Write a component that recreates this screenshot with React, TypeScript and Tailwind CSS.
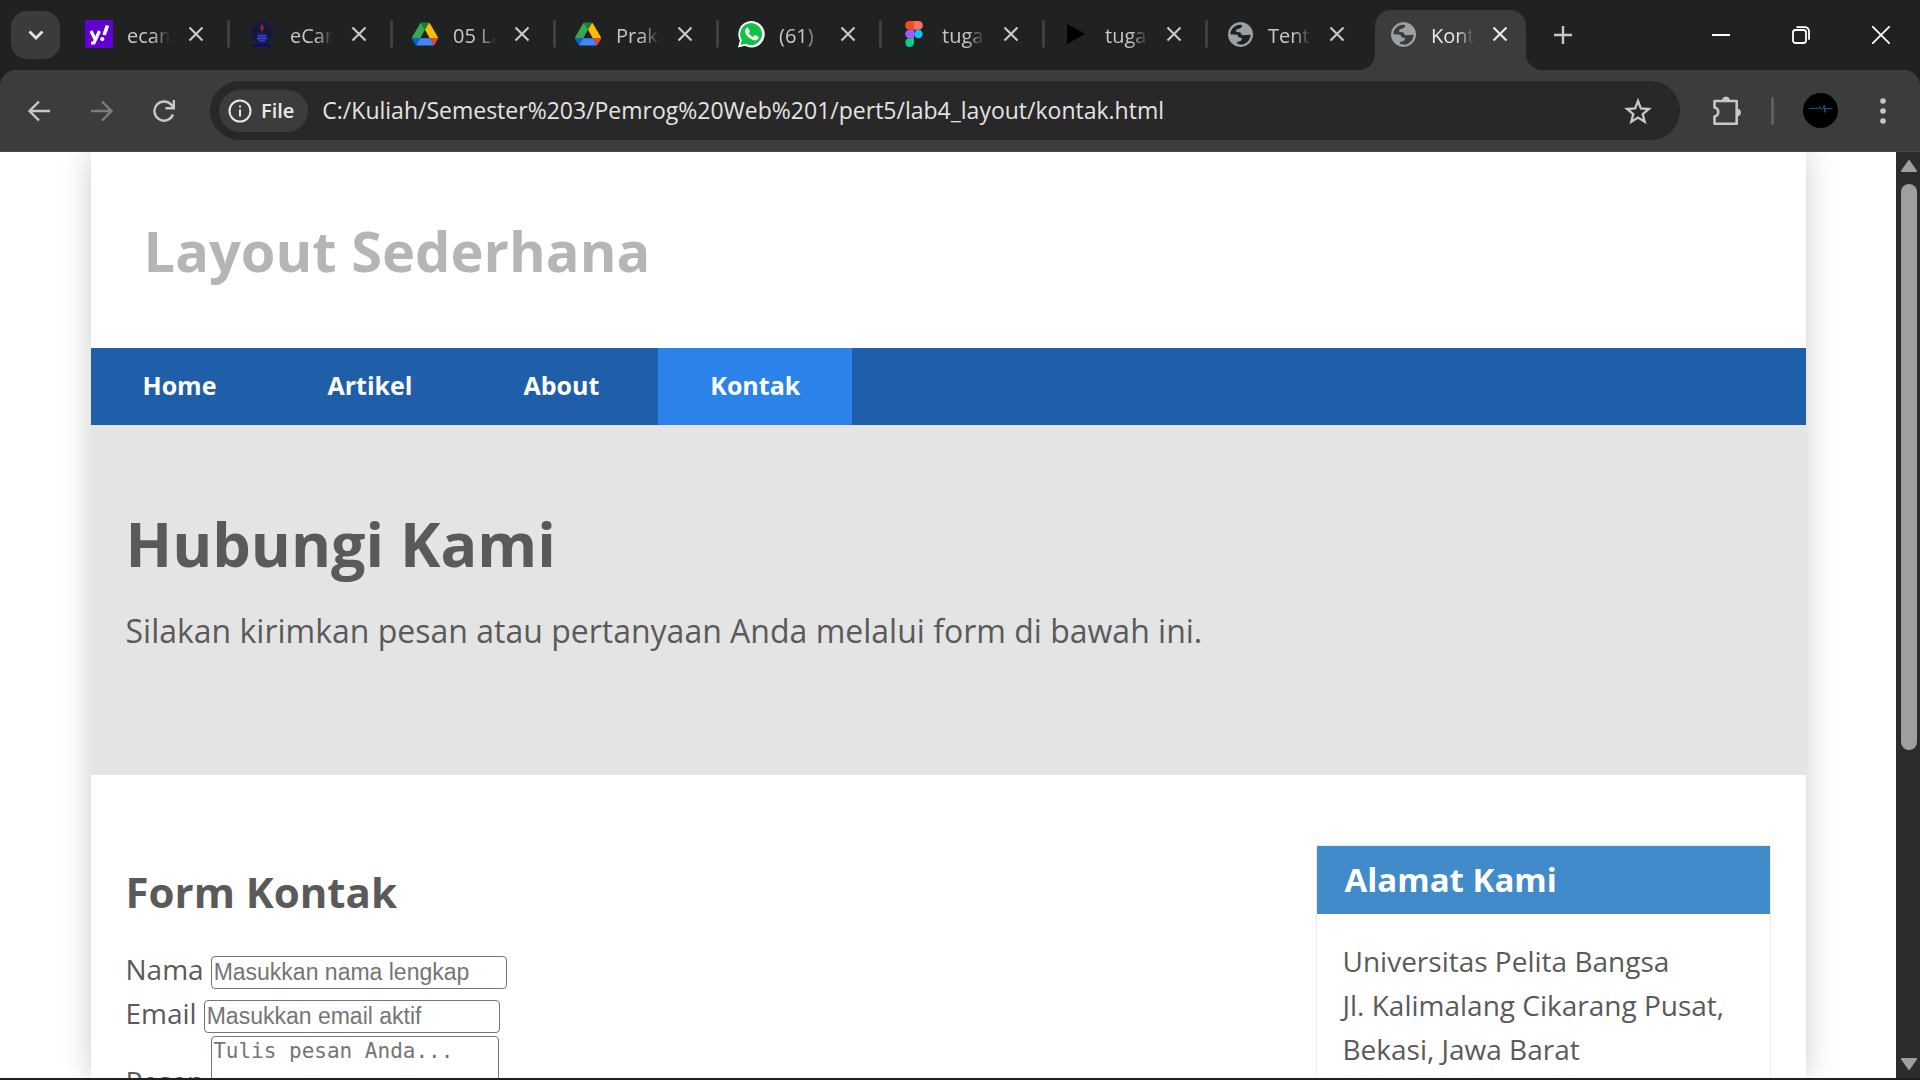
import React from "react";

type TabInfo = { title: string; icon: React.ReactNode; active?: boolean; divider?: boolean };

function Yahoo() {
  return (
    <span className="flex h-7 w-7 items-center justify-center bg-[#5f01d1]">
      <svg viewBox="0 0 28 28" className="h-7 w-7" fill="none" stroke="#fff">
        <path d="M6 11l4.500 9M14.500 11L9 23H6" strokeWidth="3.200" />
        <path d="M22.500 5.500L19 15" strokeWidth="3.600" />
        <circle cx="17.300" cy="19" r="2.100" fill="#fff" stroke="none" />
      </svg>
    </span>
  );
}

function Crest() {
  return (
    <svg viewBox="0 0 28 28" className="h-7 w-7">
      <circle cx="14" cy="13" r="11" fill="#16183a" stroke="#1a1a5c" strokeWidth="1.500" strokeDasharray="2 1" />
      <path d="M14 4c2.500 3 2 5 0 7.500-2.500-2.500-1.500-4.500 0-7.500z" fill="#a81f1d" />
      <path d="M9 15l5-2.500 5 2.500v5l-5 2-5-2z" fill="#1d2390" />
      <path d="M10 16h8M9 18.500h10M11 21h6" stroke="#4a55c4" strokeWidth="0.900" />
      <path d="M5 24h18v2.500H5z" fill="#0a0a78" />
    </svg>
  );
}

function Drive() {
  return (
    <svg viewBox="0 0 87.300 78" className="h-6 w-[26px]">
      <path d="m6.600 66.850 3.850 6.650c.8 1.400 1.950 2.500 3.300 3.300l13.750-23.800h-27.500c0 1.550.4 3.100 1.200 4.500z" fill="#0066da" />
      <path d="m43.650 25-13.750-23.800c-1.350.8-2.500 1.900-3.300 3.300l-25.400 44a9.060 9.060 0 0 0 -1.200 4.500h27.500z" fill="#34a853" />
      <path d="m73.550 76.800c1.350-.8 2.500-1.900 3.300-3.300l1.600-2.750 7.650-13.250c.8-1.400 1.200-2.950 1.200-4.500h-27.502l5.852 11.500z" fill="#ea4335" />
      <path d="m43.650 25 13.750-23.800c-1.350-.8-2.900-1.200-4.500-1.200h-18.500c-1.600 0-3.150.45-4.500 1.200z" fill="#188038" />
      <path d="m59.800 53h-32.300l-13.750 23.800c1.350.8 2.900 1.200 4.500 1.200h50.800c1.600 0 3.150-.45 4.500-1.200z" fill="#4285f4" />
      <path d="m73.400 26.500-12.700-22c-.8-1.400-1.950-2.500-3.300-3.300l-13.750 23.800 16.150 28h27.450c0-1.550-.4-3.100-1.200-4.500z" fill="#fbbc04" />
    </svg>
  );
}

function WhatsApp() {
  return (
    <svg viewBox="0 0 28 28" className="h-7 w-7">
      <path d="M1 27.500l1.900-7A13.200 13.200 0 1 1 8 25.700z" fill="#fff" />
      <path d="M3.500 25l1.300-4.900a11 11 0 1 1 4 3.700z" fill="#10c344" />
      <path d="M9.500 8.200c.5-.5 1.500-.6 1.900.1l1.300 2.800c.2.600-.3 1.200-1 2 1 1.800 2.300 3 4.400 3.900l1.300-1.500c.4-.5.9-.4 1.300-.2l2.500 1.300c.7.500.2 2.200-.6 2.900-1.200 1-2.800 1.100-4.500.5-4-1.400-6.500-4.200-7.800-6.900-.8-1.900-.1-3.700 1.200-4.900z" fill="#fff" />
    </svg>
  );
}

function Figma() {
  return (
    <svg viewBox="0 0 28 28" className="h-7 w-7">
      <path d="M14 1H9.500a4.300 4.300 0 0 0 0 8.700H14z" fill="#f24e1e" />
      <path d="M14 1h4.500a4.300 4.300 0 0 1 0 8.700H14z" fill="#ff7262" />
      <path d="M14 9.700H9.500a4.300 4.300 0 0 0 0 8.600H14z" fill="#a259ff" />
      <circle cx="18.400" cy="14" r="4.300" fill="#1abcfe" />
      <path d="M14 18.300H9.500A4.300 4.300 0 1 0 14 22.600z" fill="#0acf83" />
    </svg>
  );
}

function Play() {
  return (
    <svg viewBox="0 0 28 28" className="h-7 w-7">
      <path d="M4 4l18 10L4 24z" fill="#000" />
    </svg>
  );
}

function Globe() {
  return (
    <svg viewBox="27 39 73 73" className="h-[25px] w-[25px]" fill="#9aa0a6">
      <path
        fillRule="evenodd"
        d="M63.500 39a36.500 36.500 0 1 0 .1 0zM34 75C34 61 45 48 62 47C72 47 69 55 61 58L51 61V68L61 69C67 71 65 77 71 78L93 76C92 92 80 104 66 105L54 103V97C64 96 69 92 67 86L57 83L55 76z"
      />
    </svg>
  );
}

const tabs: TabInfo[] = [
  { title: "ecam", icon: <Yahoo />, divider: true },
  { title: "eCam", icon: <Crest />, divider: true },
  { title: "05 La", icon: <Drive />, divider: true },
  { title: "Prak", icon: <Drive />, divider: true },
  { title: "(61)", icon: <WhatsApp />, divider: true },
  { title: "tuga", icon: <Figma />, divider: true },
  { title: "tuga", icon: <Play />, divider: true },
  { title: "Tent", icon: <Globe /> },
  { title: "Kont", icon: <Globe />, active: true },
];

function Cross() {
  return (
    <svg viewBox="0 0 16 16" className="h-4 w-4" fill="none" stroke="currentColor" strokeWidth="2.200">
      <path d="M1.500 1.500l13 13M14.500 1.500l-13 13" />
    </svg>
  );
}

function Tab({ title, icon, active, divider }: TabInfo) {
  return (
    <div
      className={
        active
          ? "relative flex h-[60px] w-[151px] items-center rounded-t-2xl bg-[#3c3c3c] pr-[18px] pl-3.5 pb-3 text-[#e8e8e8]"
          : "relative flex h-[60px] w-[163px] items-center pl-3.5 pr-[30px] pb-3 text-[#c7c7c7]"
      }
    >
      {active && (
        <>
          <svg viewBox="0 0 16 16" className="absolute bottom-0 -left-4 h-4 w-4" fill="#3c3c3c">
            <path d="M16 0v16H0A16 16 0 0 0 16 0z" />
          </svg>
          <svg viewBox="0 0 16 16" className="absolute -right-4 bottom-0 h-4 w-4" fill="#3c3c3c">
            <path d="M0 0v16h16A16 16 0 0 1 0 0z" />
          </svg>
        </>
      )}
      <span className="flex w-7 shrink-0 justify-center">{icon}</span>
      <button className="ml-3.5 min-w-0 flex-1 overflow-hidden pt-1 text-left text-[20px] leading-7 whitespace-nowrap [mask-image:linear-gradient(to_right,#000_60%,transparent)]">
        {title}
      </button>
      <button aria-label="Close tab" className="ml-[18px]">
        <Cross />
      </button>
      {divider && <span className="absolute top-2.5 right-1 h-7 w-[3px] rounded-full bg-[#3e3f3f]" />}
    </div>
  );
}

function TabStrip() {
  return (
    <div className="flex h-[70px] shrink-0 items-end bg-[#202221]">
      <button aria-label="Search tabs" className="mb-[11px] ml-[11px] flex h-12 w-[49px] items-center justify-center rounded-2xl bg-[#3b3b3b]">
        <svg viewBox="0 0 16 10" className="h-2.5 w-4" fill="none" stroke="#e3e3e3" strokeWidth="2.800">
          <path d="M1.500 1.500L8 8l6.500-6.500" />
        </svg>
      </button>
      <div className="ml-[11px] flex">
        {tabs.map((t, i) => (
          <Tab key={i} {...t} />
        ))}
      </div>
      <button aria-label="New tab" className="mb-[26px] ml-7">
        <svg viewBox="0 0 18 18" className="h-[18px] w-[18px]" stroke="#c7c7c7" strokeWidth="2.400">
          <path d="M9 0v18M0 9h18" />
        </svg>
      </button>
      <div className="mr-[30px] mb-[26px] ml-auto flex gap-[62px] text-white">
        <button aria-label="Minimize">
          <svg viewBox="0 0 18 18" className="h-[18px] w-[18px]" stroke="currentColor" strokeWidth="2">
            <path d="M0 9h18" />
          </svg>
        </button>
        <button aria-label="Restore">
          <svg viewBox="0 0 18 18" className="h-[18px] w-[18px]" fill="none" stroke="currentColor" strokeWidth="1.800">
            <rect x="1" y="4" width="13" height="13" rx="2.500" />
            <path d="M4.500 1.200H13a4 4 0 0 1 4 4v8.500" />
          </svg>
        </button>
        <button aria-label="Close">
          <svg viewBox="0 0 18 18" className="h-[18px] w-[18px]" stroke="currentColor" strokeWidth="1.800">
            <path d="M0 0l18 18M18 0L0 18" />
          </svg>
        </button>
      </div>
    </div>
  );
}

function Toolbar() {
  return (
    <div className="bg-[#202221]">
      <div className="flex h-[82px] items-center rounded-t-2xl border-b border-[#4a4a4c] bg-[#3c3c3c] pr-[34px] pl-7">
        <button aria-label="Back" className="text-[#c7c7c7]">
          <svg viewBox="0 0 22 22" className="h-[22px] w-[22px]" fill="none" stroke="currentColor" strokeWidth="2.400">
            <path d="M22 11H2M11 1.500L1.500 11l9.500 9.500" />
          </svg>
        </button>
        <button aria-label="Forward" className="ml-[41px] text-[#7c7c7c]">
          <svg viewBox="0 0 22 22" className="h-[22px] w-[22px]" fill="none" stroke="currentColor" strokeWidth="2.400">
            <path d="M0 11h20M11 1.500l9.500 9.500-9.500 9.500" />
          </svg>
        </button>
        <button aria-label="Reload" className="ml-10 text-[#c7c7c7]">
          <svg viewBox="0 0 22 22" className="h-[22px] w-[22px]" fill="none" stroke="currentColor" strokeWidth="2.400">
            <path d="M20 14.500A9.600 9.600 0 1 1 18.500 5L20.500 7.500M20.800 0v8.300h-8.300" />
          </svg>
        </button>
        <div className="ml-[35px] flex h-[59px] min-w-0 flex-1 items-center rounded-full bg-[#282828] pr-7 pl-[9px]">
          <button className="flex h-[42px] shrink-0 items-center gap-[9px] rounded-full bg-[#3c3c3c] pr-3.5 pl-[9px] text-[20px] font-semibold text-[#e8e8e8]">
            <svg viewBox="0 0 24 24" className="h-6 w-6" fill="none" stroke="currentColor" strokeWidth="2">
              <circle cx="12" cy="12" r="10.500" />
              <path d="M12 10.500v7M12 6.500v2" />
            </svg>
            File
          </button>
          <input
            aria-label="Address"
            readOnly
            value="C:/Kuliah/Semester%203/Pemrog%20Web%201/pert5/lab4_layout/kontak.html"
            className="ml-3.5 min-w-0 flex-1 bg-transparent text-[23px] text-[#e3e3e3] outline-none"
          />
          <button aria-label="Bookmark" className="text-[#c7c7c7]">
            <svg viewBox="0 0 28 28" className="h-7 w-7" fill="none" stroke="currentColor" strokeWidth="2.300">
              <path d="M14 4l2.900 7.400 8 .6-6.200 5.100 2 7.700L14 20.600l-6.700 4.200 2-7.700L3.100 12l8-.6z" />
            </svg>
          </button>
        </div>
        <button aria-label="Extensions" className="ml-8 text-[#c7c7c7]">
          <svg viewBox="0 0 30 30" className="h-[30px] w-[30px]" fill="none" stroke="currentColor" strokeWidth="2.600" strokeLinejoin="round">
            <path d="M2.500 5h22.200v22.700H2.500v-7.200c5-1 5-8 0-9z" />
            <path d="M10.500 4.500a3.500 3.500 0 0 1 7 0zM25 13a3.500 3.500 0 0 1 0 7z" fill="currentColor" strokeWidth="1" />
          </svg>
        </button>
        <span className="ml-[29px] h-7 w-[3px] rounded-full bg-[#5e5e5e]" />
        <button aria-label="Profile" className="ml-[29px]">
          <svg viewBox="0 0 35 35" className="h-[35px] w-[35px]" fill="none">
            <circle cx="17.500" cy="17.500" r="17.500" fill="#000" />
            <path d="M6 15.500h10l1-2 1 3 1-1h1.500l.6-3.500.8 7.500.6-4h7" stroke="#15557e" strokeWidth="1" />
          </svg>
        </button>
        <button aria-label="Menu" className="ml-[42px]">
          <svg viewBox="0 0 6 26" className="h-[26px] w-1.5" fill="#c7c7c7">
            <circle cx="3" cy="3" r="2.800" />
            <circle cx="3" cy="13" r="2.800" />
            <circle cx="3" cy="23" r="2.800" />
          </svg>
        </button>
      </div>
    </div>
  );
}

const links = ["Home", "Artikel", "About", "Kontak"];

function Site() {
  return (
    <div className="mx-auto h-full w-[1715px] max-w-full bg-white text-[28px] leading-[44px] text-[#5a5a5a] shadow-[0_0_28px_#ccc]">
      <header className="p-[35px]">
        <h1 className="mx-[18px] my-[35px] text-[56px] leading-[56px] font-bold text-[#b5b5b5]">Layout Sederhana</h1>
      </header>
      <nav className="flex gap-[7px] bg-[#1f5faa] text-[25px] leading-[25px] font-bold text-white">
        {links.map((l) => (
          <a key={l} href="#" className={l === "Kontak" ? "bg-[#2b83ea] px-[52px] pt-[25px] pb-[27px]" : "px-[52px] pt-[25px] pb-[27px]"}>
            {l}
          </a>
        ))}
      </nav>
      <section className="bg-[#e4e4e4] px-[35px] pt-[88px] pb-[122px]">
        <h1 className="mb-[35px] text-[61px] leading-[61px] font-bold">Hubungi Kami</h1>
        <p className="text-[32px] leading-[44px]">Silakan kirimkan pesan atau pertanyaan Anda melalui form di bawah ini.</p>
      </section>
      <div className="mt-[35px] flex items-start justify-between p-[35px]">
        <section className="pt-[26px]">
          <h2 className="mb-[34px] text-[42px] leading-[42px] font-bold">Form Kontak</h2>
          <form>
            <div className="flex items-baseline gap-[7px]">
              <label htmlFor="nama">Nama</label>
              <input id="nama" placeholder="Masukkan nama lengkap" className="h-[33px] w-[296px] rounded-[4px] border border-[#767676] px-[2px] font-['Liberation_Sans',sans-serif] text-[23px] leading-[27px] placeholder:text-[#757575]" />
            </div>
            <div className="flex items-baseline gap-[7px]">
              <label htmlFor="email">Email</label>
              <input id="email" type="email" placeholder="Masukkan email aktif" className="h-[33px] w-[296px] rounded-[4px] border border-[#767676] px-[2px] font-['Liberation_Sans',sans-serif] text-[23px] leading-[27px] placeholder:text-[#757575]" />
            </div>
            <div className="flex items-end gap-[7px]">
              <label htmlFor="pesan">Pesan</label>
              <textarea id="pesan" placeholder="Tulis pesan Anda..." className="mt-px h-[67px] w-[288px] rounded-[4px] border border-[#767676] px-px py-px font-['DejaVu_Sans_Mono',monospace] text-[21px] leading-[27px] placeholder:text-[#757575]" />
            </div>
          </form>
        </section>
        <aside className="w-[455px] border border-[#eee]">
          <h3 className="bg-[#428bca] px-7 py-[17px] text-[33px] leading-[34px] font-bold text-white">Alamat Kami</h3>
          <p className="px-[26px] py-[25px]">
            Universitas Pelita Bangsa
            <br />
            Jl. Kalimalang Cikarang Pusat,
            <br />
            Bekasi, Jawa Barat
          </p>
        </aside>
      </div>
    </div>
  );
}

function Scrollbar() {
  return (
    <div className="flex w-6 shrink-0 flex-col items-center bg-[#2c2c2c] py-2 pl-0.5">
      <svg viewBox="0 0 16 12" className="h-3 w-4" fill="#9f9f9f" stroke="#9f9f9f" strokeLinejoin="round" strokeWidth="2">
        <path d="M8 1l7 10H1z" />
      </svg>
      <div className="mt-3 h-[566px] w-4 rounded-full bg-[#9f9f9f]" />
      <svg viewBox="0 0 16 12" className="mt-auto h-3 w-4" fill="#9f9f9f" stroke="#9f9f9f" strokeLinejoin="round" strokeWidth="2">
        <path d="M8 11L1 1h14z" />
      </svg>
    </div>
  );
}

export default function App() {
  return (
    <div className="flex h-screen flex-col overflow-hidden bg-white font-['Open_Sans','Noto_Sans',sans-serif]">
      <TabStrip />
      <Toolbar />
      <div className="flex min-h-0 flex-1 border-b-2 border-[#201f1a]">
        <main className="min-w-0 flex-1 overflow-hidden">
          <Site />
        </main>
        <Scrollbar />
      </div>
    </div>
  );
}
